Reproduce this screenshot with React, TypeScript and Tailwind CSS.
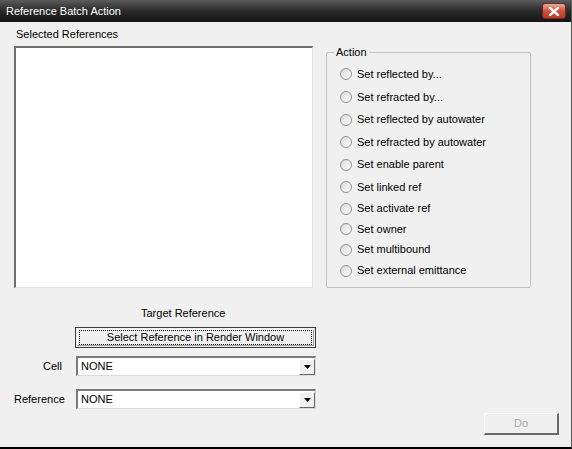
import { type ReactNode } from 'react'

const actions = [
  { label: 'Set reflected by...', h: 'h-[24px]' },
  { label: 'Set refracted by...', h: 'h-[22px]' },
  { label: 'Set reflected by autowater', h: 'h-[23px]' },
  { label: 'Set refracted by autowater', h: 'h-[22px]' },
  { label: 'Set enable parent', h: 'h-[23px]' },
  { label: 'Set linked ref', h: 'h-[22px]' },
  { label: 'Set activate ref', h: 'h-[21px]' },
  { label: 'Set owner', h: 'h-[20px]' },
  { label: 'Set multibound', h: 'h-[21px]' },
  { label: 'Set external emittance', h: 'h-[21px]' },
]

function Radio({ children, h }: { children: ReactNode; h: string }) {
  return (
    <label className={`flex ${h} items-center gap-[5px]`}>
      <span className="h-[12px] w-[12px] rounded-full border border-[#8f9092] bg-gradient-to-br from-[#d8d8d8] to-[#ffffff]" />
      <span>{children}</span>
    </label>
  )
}

function Combo({ value }: { value: string }) {
  return (
    <div className="flex h-[20px] w-[240px] items-center border-t-2 border-l-2 border-b border-r border-t-[#7a7a7a] border-l-[#7a7a7a] border-b-[#dcdcdc] border-r-[#dcdcdc] bg-white">
      <span className="flex-1 pl-[3px]">{value}</span>
      <span className="flex h-[16px] w-[16px] items-center justify-center border-t border-l border-b border-r border-t-white border-l-white border-b-[#696969] border-r-[#696969] bg-[#f0f0f0]">
        <svg width="7" height="4" viewBox="0 0 7 4">
          <path d="M0 0h7L3.5 4z" fill="#000" />
        </svg>
      </span>
    </div>
  )
}

export default function App() {
  return (
    <div
      className="flex h-[449px] w-[572px] flex-col overflow-hidden border-r border-b-2 border-r-[#5a5a5a] border-b-black bg-[#f0f0f0] text-[11px] text-black"
      style={{ fontFamily: '"Liberation Sans", Arial, sans-serif' }}
    >
      {/* title bar */}
      <div className="flex h-[22px] shrink-0 items-center justify-between bg-gradient-to-b from-[#5c5c5c] via-[#2a2a2a] to-[#151515] pl-[6px] pr-[5px]">
        <span className="text-[11px] text-white">Reference Batch Action</span>
        <button className="flex h-[16px] w-[24px] items-center justify-center rounded-[3px] border border-[#6b2a22] bg-gradient-to-b from-[#e9a99b] via-[#d0503c] to-[#c0392b]">
          <svg width="10" height="9" viewBox="0 0 10 9">
            <path d="M1 1l8 7M9 1L1 8" stroke="#fff" strokeWidth="2.4" strokeLinecap="square" />
          </svg>
        </button>
      </div>

      <div className="flex flex-1 flex-col pl-[14px] pt-[5px]">
        <div className="flex">
          <div className="flex w-[299px] flex-col">
            <div className="h-[19px] pl-[2px] leading-[14px]">Selected References</div>
            <div className="h-[242px] border-t-2 border-l-2 border-b border-r border-t-[#6f6f6f] border-l-[#6f6f6f] border-b-[#e3e3e3] border-r-[#e3e3e3] bg-white" />
          </div>

          <fieldset className="relative ml-[13px] mt-[25px] h-[236px] w-[205px] rounded-[2px] border border-[#c2c2c2] pl-[13px] pt-[9px]">
            <span className="absolute -top-[8px] left-[7px] bg-[#f0f0f0] px-[2px] leading-[14px]">Action</span>
            {actions.map(a => (
              <Radio key={a.label} h={a.h}>
                {a.label}
              </Radio>
            ))}
          </fieldset>
        </div>

        <div className="mt-[18px] pl-[127px] leading-[14px]">Target Reference</div>

        <button className="ml-[61px] mt-[7px] flex h-[21px] w-[241px] items-center justify-center border border-[#3c3c3c] bg-[#f0f0f0] p-[1px]">
          <span className="flex h-full w-full items-center justify-center border-t border-l border-b border-r border-t-white border-l-white border-b-[#a0a0a0] border-r-[#a0a0a0]">
            <span className="flex h-[15px] w-[233px] items-center justify-center border border-dotted border-black">
              Select Reference in Render Window
            </span>
          </span>
        </button>

        <div className="mt-[8px] flex items-center">
          <span className="w-[49px] pr-[1px] text-right">Cell</span>
          <span className="ml-[13px]">
            <Combo value="NONE" />
          </span>
        </div>

        <div className="mt-[13px] flex items-center">
          <span className="w-[50px]">Reference</span>
          <span className="ml-[12px]">
            <Combo value="NONE" />
          </span>
        </div>

        <div className="mt-[4px] flex justify-end pr-[12px]">
          <button
            disabled
            className="flex h-[22px] w-[75px] items-center justify-center border-t border-l border-b-2 border-r-2 border-t-white border-l-white border-b-[#6a6a6a] border-r-[#6a6a6a] bg-[#f0f0f0] text-[#a8a8a8]"
          >
            Do
          </button>
        </div>
      </div>
    </div>
  )
}
